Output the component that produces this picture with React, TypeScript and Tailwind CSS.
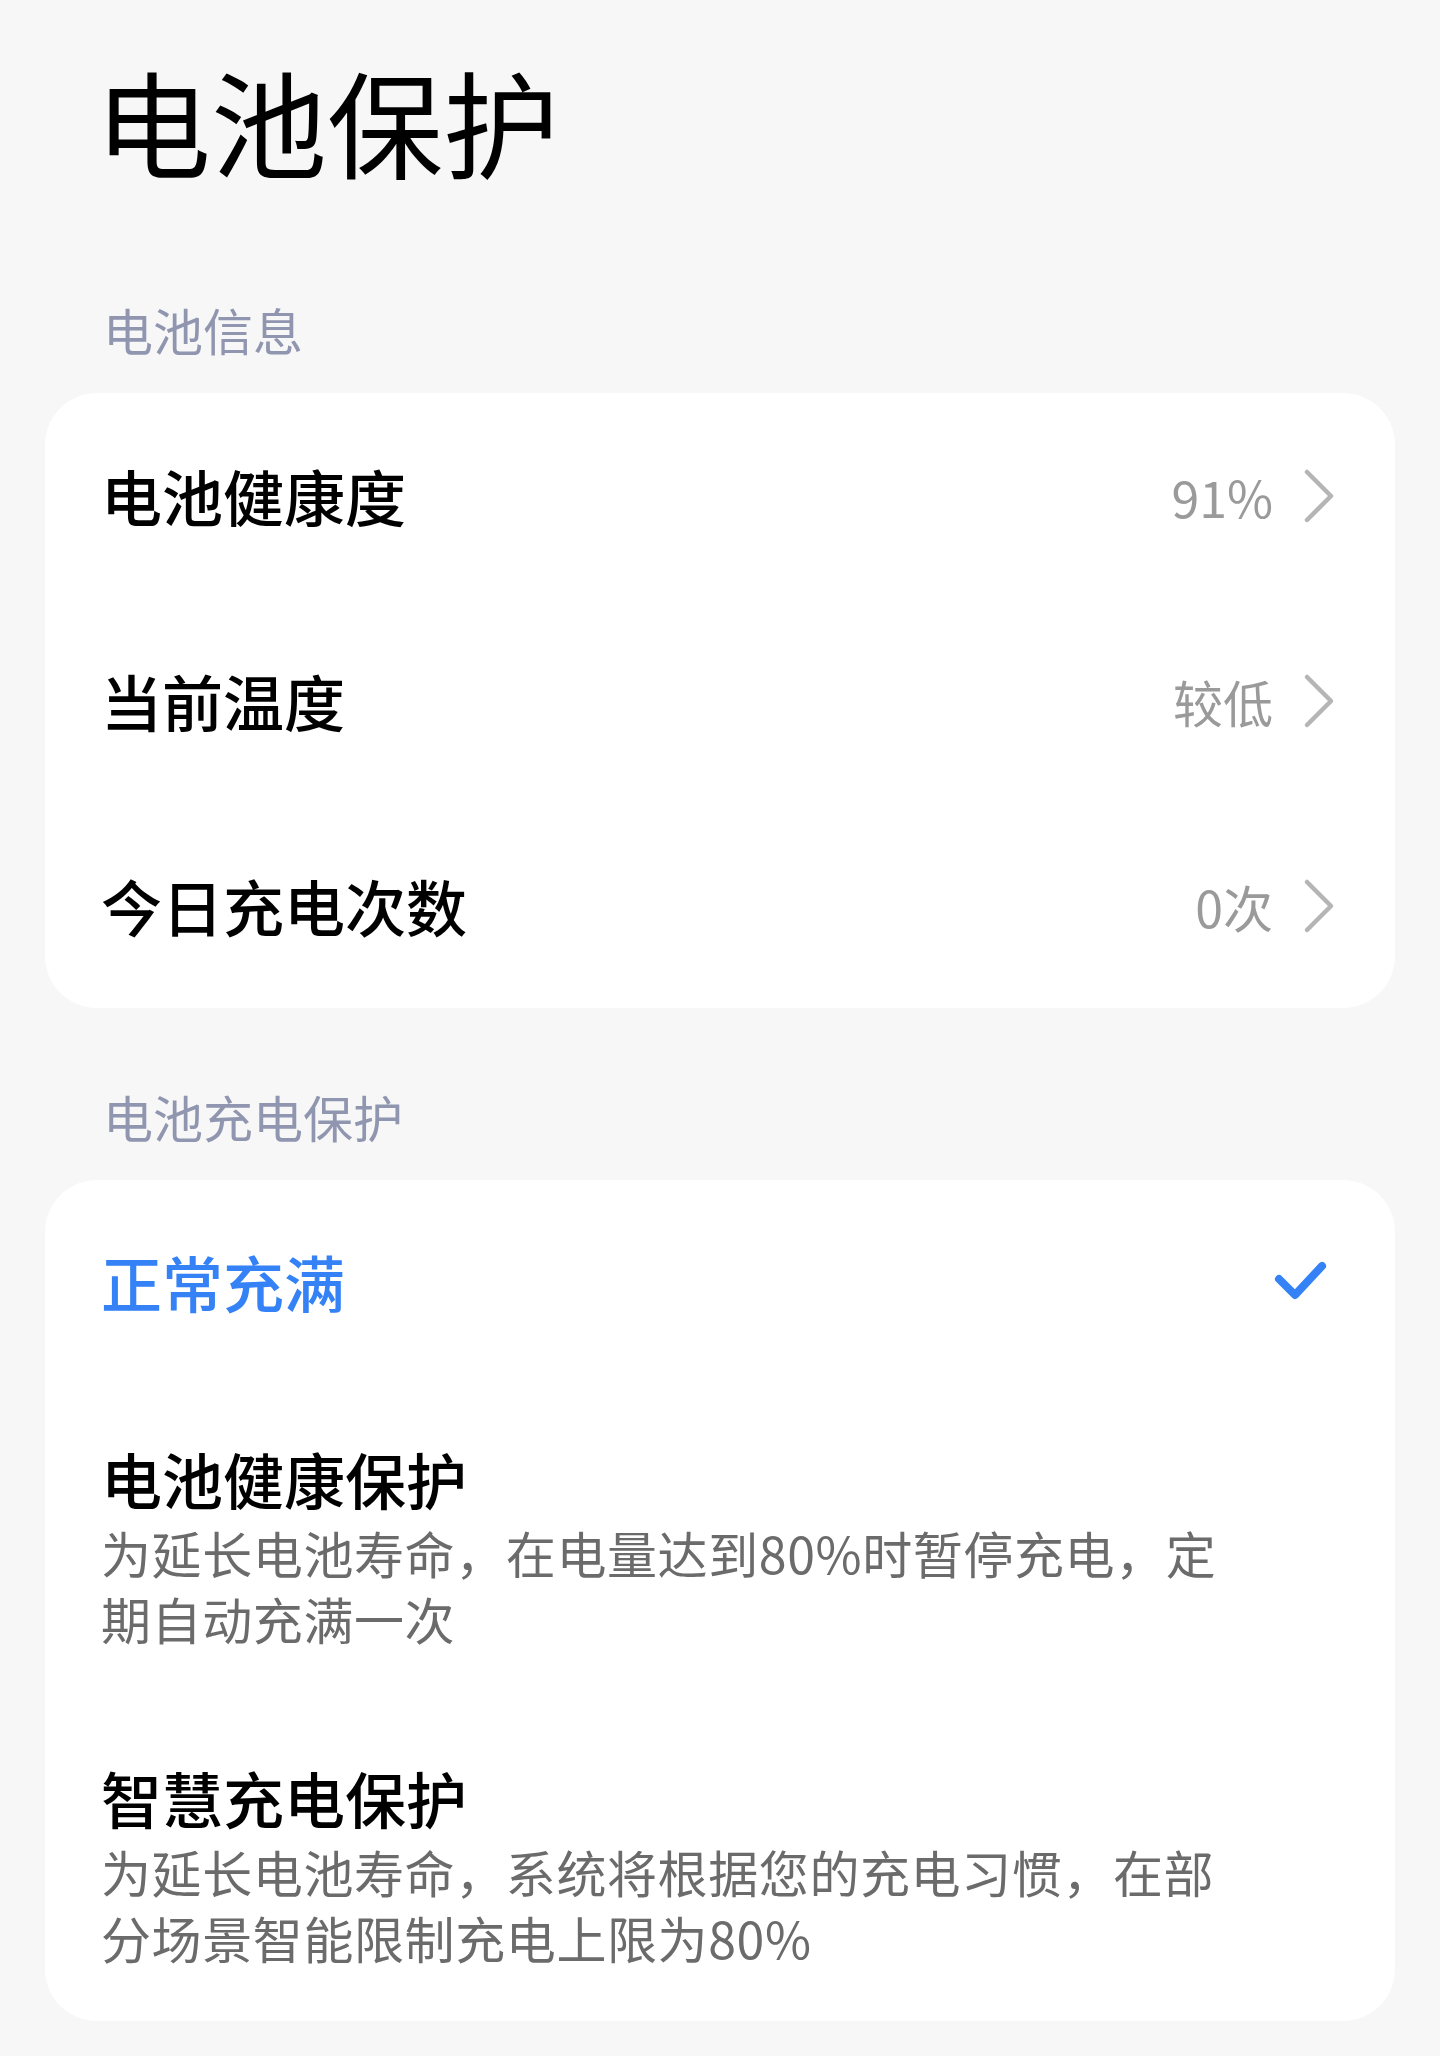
import { Fragment } from "react";

const font = { fontFamily: '"Noto Sans CJK SC", "Noto Sans", sans-serif' };

interface InfoRow {
  label: string;
  value: string;
}

const infoRows: InfoRow[] = [
  { label: "电池健康度", value: "91%" },
  { label: "当前温度", value: "较低" },
  { label: "今日充电次数", value: "0次" },
];

const modes = [
  {
    title: "电池健康保护",
    desc: "为延长电池寿命，在电量达到80%时暂停充电，定期自动充满一次",
  },
  {
    title: "智慧充电保护",
    desc: "为延长电池寿命，系统将根据您的充电习惯，在部分场景智能限制充电上限为80%",
  },
];

function Chevron() {
  return (
    <svg width="32" height="56" viewBox="0 0 32 56" fill="none">
      <polyline
        points="4,4 28,28 4,52"
        stroke="#b5b5b5"
        strokeWidth="4.5"
        strokeLinecap="round"
        strokeLinejoin="round"
      />
    </svg>
  );
}

function Check() {
  return (
    <svg width="56" height="48" viewBox="0 0 56 48" fill="none">
      <polyline
        points="6,21 22,37 49,8"
        stroke="#3482f6"
        strokeWidth="8"
        strokeLinecap="round"
        strokeLinejoin="round"
      />
    </svg>
  );
}

export default function App() {
  return (
    <div className="min-h-[2056px] w-full bg-[#f7f7f7] px-[45px]" style={font}>
      <div className="pl-[50px] pt-[50px] text-[116px] leading-[138px] text-black">
        电池保护
      </div>

      <div className="mt-[111px] pl-[58px] text-[50px] leading-[60px] text-[#9196b0]">
        电池信息
      </div>
      <div className="mt-[34px] flex flex-col rounded-[52px] bg-white pl-[56px] pr-[60px]">
        {infoRows.map((row) => (
          <div key={row.label} className="flex h-[205px] items-center">
            <div className="flex-1 text-[61px] font-medium leading-[80px] text-black">
              {row.label}
            </div>
            <div className="text-[50px] leading-[60px] text-[#9a9a9a]">{row.value}</div>
            <div className="ml-[30px] flex items-center">
              <Chevron />
            </div>
          </div>
        ))}
      </div>

      <div className="mt-[78px] pl-[58px] text-[50px] leading-[60px] text-[#9196b0]">
        电池充电保护
      </div>
      <div className="mt-[34px] flex flex-col rounded-[52px] bg-white pb-[51px] pl-[56px] pr-[60px]">
        <div className="flex h-[204px] items-center">
          <div className="flex-1 text-[61px] font-medium leading-[80px] text-[#3482f6]">
            正常充满
          </div>
          <div className="mr-[6px]">
            <Check />
          </div>
        </div>
        {modes.map((m, idx) => (
          <Fragment key={m.title}>
            <div className={idx === 0 ? "pb-[52px] pt-[55px]" : "pt-[55px]"}>
              <div className="text-[61px] font-medium leading-[80px] text-black">
                {m.title}
              </div>
              <div className="w-[1135px] text-[50px] leading-[66px] tracking-[0.6px] text-[#6b6b6b]">
                {m.desc}
              </div>
            </div>
          </Fragment>
        ))}
      </div>
    </div>
  );
}
